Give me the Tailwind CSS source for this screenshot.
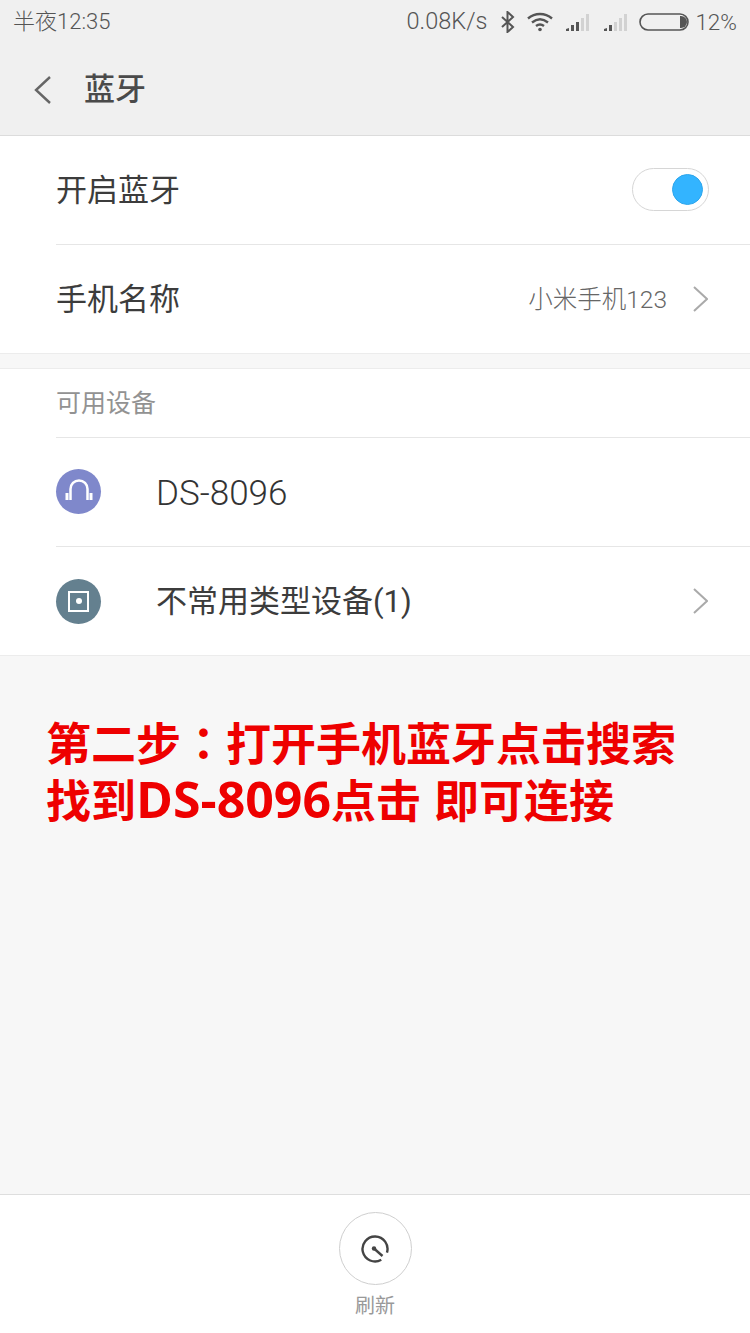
<!DOCTYPE html>
<html lang="zh-CN">
<head>
<meta charset="utf-8">
<script src="https://cdn.jsdelivr.net/npm/@tailwindcss/browser@4"></script>
</head>
<body class="m-0">
<div class="w-[750px] h-[1333px] flex flex-col bg-[#f7f7f7] overflow-hidden font-['Roboto','Noto_Sans_CJK_SC',sans-serif]">
  <header class="h-[136px] shrink-0 bg-[#f0f0f0] border-b border-[#dcdcdc] flex flex-col">
    <div class="h-[44px] flex items-center pl-[13px] pr-[13px] text-[#555] text-[22px] leading-none">
      <span class="font-light">半夜12:35</span>
      <div class="ml-auto flex items-center">
        <span class="text-[23.500px] font-light">0.08K/s</span>
        <svg class="ml-[13px]" width="16" height="22" viewBox="0 0 16 22" fill="none" stroke="#555" stroke-width="2"><path d="M2 6l11 10-5.500 5V1L13 6 2 16"/></svg>
        <svg class="ml-[10px]" width="28" height="20" viewBox="0 0 28 20" fill="none" stroke="#555" stroke-width="2.400"><path d="M2 6.500C9 .5 19 .5 26 6.500"/><path d="M6 10.500c5-4 11-4 16 0"/><path d="M10 14c2.500-2 5.500-2 8 0"/><circle cx="14" cy="17.500" r="1.800" fill="#555" stroke="none"/></svg>
        <svg class="ml-[11px]" width="28" height="20" viewBox="0 0 28 20"><g fill="#555"><path d="M1 19v-2l3-1v3z"/><rect x="6" y="13" width="3" height="6"/><rect x="11" y="10" width="3" height="9"/></g><g fill="#d2d2d2"><rect x="16" y="6" width="3" height="13"/><rect x="21" y="2" width="3" height="17"/></g></svg>
        <svg class="ml-[10px]" width="28" height="20" viewBox="0 0 28 20"><g fill="#555"><path d="M1 19v-2l3-1v3z"/><rect x="6" y="13" width="3" height="6"/></g><g fill="#d2d2d2"><rect x="11" y="10" width="3" height="9"/><rect x="16" y="6" width="3" height="13"/><rect x="21" y="2" width="3" height="17"/></g></svg>
        <svg class="ml-[8px]" width="50" height="18" viewBox="0 0 50 18" fill="none"><rect x="1" y="1" width="48" height="16" rx="8" stroke="#555" stroke-width="1.600"/><path d="M41 3h1a6 6 0 0 1 0 12h-1z" fill="#555"/></svg>
        <span class="ml-[6px] text-[22.500px] font-light">12%</span>
      </div>
    </div>
    <div class="flex-1 flex items-center">
      <svg class="ml-[33px]" width="20" height="32" viewBox="0 0 20 32" fill="none" stroke="#666" stroke-width="2.400"><path d="M17 3 3 16l14 13"/></svg>
      <h1 class="ml-[31px] text-[31px] leading-none font-medium text-[#4a4a4a]">蓝牙</h1>
    </div>
  </header>

  <section class="bg-white border-b border-[#ececec]">
    <div class="h-[109px] ml-[56px] pr-[41px] flex items-center justify-between border-b border-[#e6e6e6]">
      <span class="pt-[3px] text-[31px] text-[#3c3c3c]">开启蓝牙</span>
      <div class="mb-[2px] w-[77px] h-[43px] rounded-full border border-[#d6d6d6] bg-white flex items-center justify-end pr-[5px]">
        <span class="w-[31px] h-[31px] rounded-full bg-[#33b4ff] border border-[#2ea6ec]"></span>
      </div>
    </div>
    <div class="h-[108px] ml-[56px] pr-[42px] flex items-center">
      <span class="pt-[2px] text-[31px] text-[#3c3c3c]">手机名称</span>
      <span class="ml-auto pt-[2px] text-[24.500px] font-light text-[#666]">小米手机123</span>
      <svg class="ml-[25px]" width="16" height="26" viewBox="0 0 16 26" fill="none" stroke="#aaa" stroke-width="2"><path d="m2 1 13 12L2 25"/></svg>
    </div>
  </section>

  <section class="mt-[14px] bg-white border-t border-b border-[#ececec]">
    <div class="h-[69px] ml-[56px] pt-[2px] flex items-center border-b border-[#e6e6e6] text-[25px] text-[#929292]">可用设备</div>
    <div class="h-[109px] ml-[56px] flex items-center border-b border-[#e6e6e6]">
      <span class="mb-[2px] w-[45px] h-[45px] rounded-full bg-[#7f88cb] flex items-center justify-center">
        <svg width="30" height="24" viewBox="0 0 30 24" fill="none"><path d="M6.500 21V10a8.500 8.500 0 0 1 17 0v11" stroke="#fff" stroke-width="2.500"/><rect x="1.500" y="14" width="3" height="7" fill="#fff"/><rect x="25.500" y="14" width="3" height="7" fill="#fff"/></svg>
      </span>
      <span class="ml-[55px] pt-[5px] text-[35px] font-light text-[#333]">DS-8096</span>
    </div>
    <div class="h-[108px] ml-[56px] pr-[42px] flex items-center">
      <span class="w-[45px] h-[45px] rounded-full bg-[#64808f] flex items-center justify-center">
        <span class="w-[21px] h-[21px] border-[2.500px] border-white flex items-center justify-center"><span class="w-[6px] h-[6px] rounded-full bg-white"></span></span>
      </span>
      <span class="ml-[55px] pt-[2px] text-[31px] text-[#3c3c3c]">不常用类型设备(1)</span>
      <svg class="ml-auto" width="16" height="26" viewBox="0 0 16 26" fill="none" stroke="#aaa" stroke-width="2"><path d="m2 1 13 12L2 25"/></svg>
    </div>
  </section>

  <main class="flex-1 pl-[46px] pt-[59px] text-[45px] leading-[57px] font-bold text-[#ee0000] font-['Open_Sans','Noto_Sans_CJK_SC',sans-serif]">
    <p class="whitespace-nowrap">第二步<span lang="zh-TW" class="inline-block leading-[45px] font-['Noto_Sans_CJK_TC',sans-serif]">：</span>打开手机蓝牙点击搜索</p>
    <p class="whitespace-nowrap">找到<span class="inline-block text-[50px] leading-[50px]">DS-8096</span>点击<span class="text-[50px] leading-none"> </span>即可连接</p>
  </main>

  <footer class="h-[139px] shrink-0 bg-white border-t border-[#dedede] flex flex-col items-center pt-[17px]">
    <span class="w-[73px] h-[73px] rounded-full border border-[#cfcfcf] flex items-center justify-center">
      <svg width="30" height="30" viewBox="0 0 30 30" fill="none" stroke="#444" stroke-width="2.400"><path d="M21.250 25.800A12.500 12.500 0 1 1 26.950 18.650"/><circle cx="14" cy="14.500" r="2.200" fill="#444" stroke="none"/><path d="m14 14.500 8.500 7.500"/></svg>
    </span>
    <span class="mt-[8px] text-[20px] leading-[26px] text-[#999]">刷新</span>
  </footer>
</div>
</body>
</html>
